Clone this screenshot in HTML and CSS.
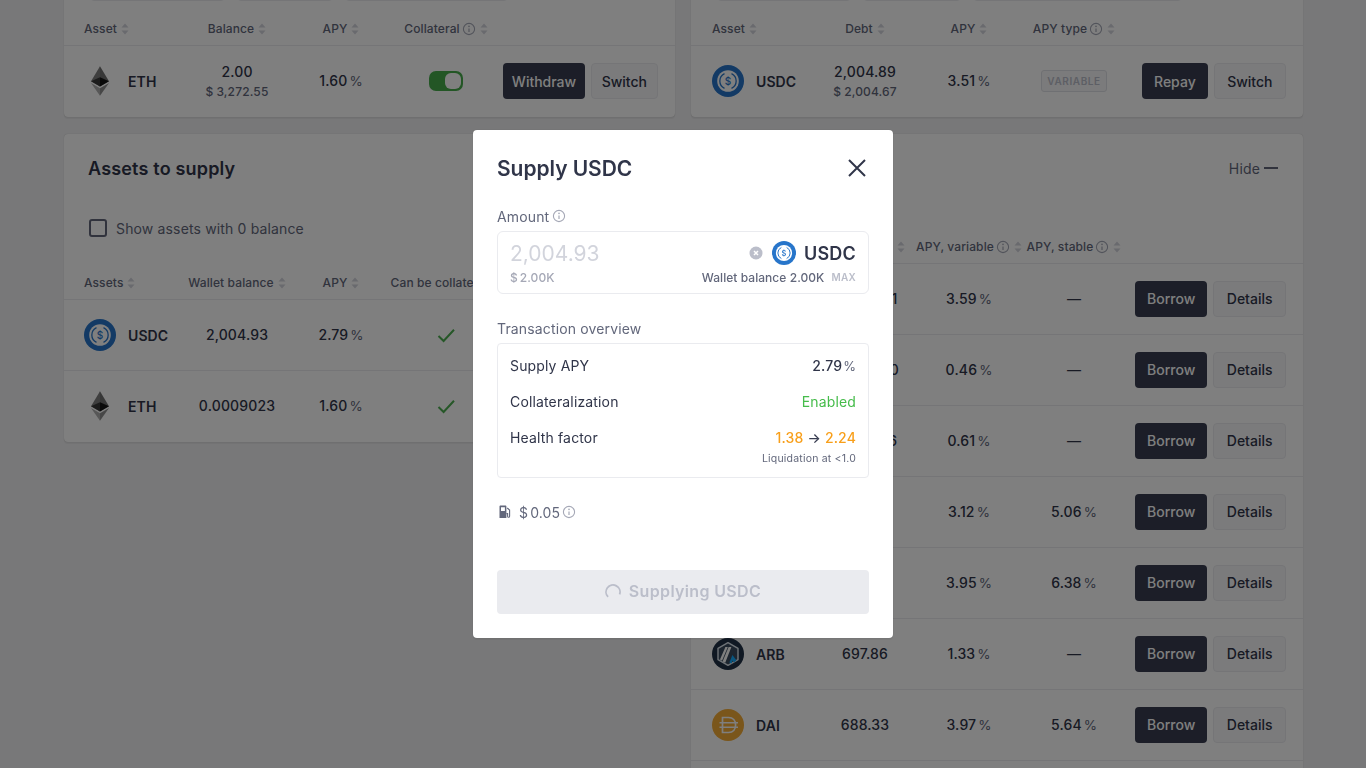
FILE: index.html
```html
<!DOCTYPE html>
<html lang="en">
<head>
<meta charset="utf-8">
<title>Supply USDC</title>
<link rel="stylesheet" href="styles.css">
</head>
<body>
<svg class="sprite" width="0" height="0" aria-hidden="true">
  <symbol id="i-sort" viewBox="0 0 8 12">
    <path d="M4 0.5 7.5 4.5H0.5Z"/><path d="M4 11.5 0.5 7.5H7.5Z"/>
  </symbol>
  <symbol id="i-info" viewBox="0 0 14 14">
    <circle cx="7" cy="7" r="5.6" fill="none" stroke="currentColor" stroke-width="1.1"/>
    <path d="M7 6.4V10" fill="none" stroke="currentColor" stroke-width="1.2"/>
    <circle cx="7" cy="4.4" r=".8" fill="currentColor"/>
  </symbol>
  <symbol id="i-usdc" viewBox="0 0 32 32">
    <circle cx="16" cy="16" r="16" fill="#2775CA"/>
    <circle cx="16" cy="16" r="10.8" fill="#fff"/>
    <path d="M12.5 8.6A8.2 8.2 0 0 0 12.5 23.4M19.5 8.6A8.2 8.2 0 0 1 19.5 23.4" fill="none" stroke="#2775CA" stroke-width="1.3"/>
    <text x="16" y="19.6" text-anchor="middle" font-family="Inter, sans-serif" font-size="10" font-weight="500" fill="#2775CA">$</text>
  </symbol>
  <symbol id="i-eth" viewBox="0 0 256 417">
    <polygon fill="#6E6E6E" points="127.96,0 125.17,9.5 125.17,285.17 127.96,287.96 255.92,212.32"/>
    <polygon fill="#7E7E7E" points="127.96,0 0,212.32 127.96,287.96 127.96,154.16"/>
    <polygon fill="#8E8E8E" points="127.96,312.19 126.39,314.11 126.39,412.31 127.96,416.91 256,236.59"/>
    <polygon fill="#AEAEAE" points="127.96,416.91 127.96,312.19 0,236.59"/>
    <polygon fill="#141414" points="127.96,287.96 255.92,212.32 127.96,154.16"/>
    <polygon fill="#393939" points="0,212.32 127.96,287.96 127.96,154.16"/>
  </symbol>
  <symbol id="i-arb" viewBox="0 0 32 32">
    <circle cx="16" cy="16" r="16" fill="#213147"/>
    <path d="M16 4.6 26 10.3V21.7L16 27.4 6 21.7V10.3Z" fill="#3a4a5f" stroke="#dfe7ef" stroke-width="1.4" stroke-linejoin="round"/>
    <path d="M10.6 23.4 16.6 9H19.4L13.2 24.8Z" fill="#fff"/>
    <path d="M8 21.6 13.4 9H15.8L10 22.8Z" fill="#fff"/>
    <path d="M17.4 24.4 20.4 17 24.4 22.2 22 24.6 20.4 22.4 19.6 25.4Z" fill="#12AAFF"/>
  </symbol>
  <symbol id="i-dai" viewBox="0 0 32 32">
    <circle cx="16" cy="16" r="16" fill="#F5AC37"/>
    <path d="M10.5 8.5H16.5C21 8.5 23.6 11.6 23.6 16S21 23.5 16.5 23.5H10.5Z" fill="none" stroke="#FEFEFD" stroke-width="1.7"/>
    <path d="M7.5 13.8H26M7.5 18.2H26" fill="none" stroke="#FEFEFD" stroke-width="1.5"/>
  </symbol>
  <symbol id="i-check" viewBox="0 0 20 20">
    <path d="M2.5 11 7.6 16 18 4.8" fill="none" stroke="currentColor" stroke-width="2"/>
  </symbol>
</svg>

<main class="page">
  <div class="column">
    <section class="card">
      <div class="card-head-top"></div>
      <div class="chips">
        <span class="chip chip-l1"></span>
        <span class="chip chip-l2"></span>
        <span class="chip chip-l3"></span>
      </div>
      <div class="grid thead">
        <span class="th th-left">Asset <svg class="sort"><use href="#i-sort"/></svg></span>
        <span class="th">Balance <svg class="sort"><use href="#i-sort"/></svg></span>
        <span class="th">APY <svg class="sort"><use href="#i-sort"/></svg></span>
        <span class="th">Collateral <svg class="info"><use href="#i-info"/></svg><svg class="sort"><use href="#i-sort"/></svg></span>
        <span></span>
      </div>
      <div class="grid trow last">
        <div class="asset"><span class="logo"><svg class="eth"><use href="#i-eth"/></svg></span><span class="sym">ETH</span></div>
        <div class="val stack"><span>2.00</span><span class="usd"><i>$</i>3,272.55</span></div>
        <div class="val"><span class="pct">1.60<em>%</em></span></div>
        <div class="val"><span class="toggle"></span></div>
        <div class="actions"><button class="btn dark tight">Withdraw</button><button class="btn line narrow">Switch</button></div>
      </div>
    </section>

    <section class="card">
      <header class="card-head"><h2 class="card-title">Assets to supply</h2></header>
      <label class="zero"><span class="box"></span>Show assets with 0 balance</label>
      <div class="grid thead">
        <span class="th th-left">Assets <svg class="sort"><use href="#i-sort"/></svg></span>
        <span class="th">Wallet balance <svg class="sort"><use href="#i-sort"/></svg></span>
        <span class="th">APY <svg class="sort"><use href="#i-sort"/></svg></span>
        <span class="th th-shift">Can be collateral <svg class="info"><use href="#i-info"/></svg></span>
        <span></span>
      </div>
      <div class="grid trow">
        <div class="asset"><span class="logo"><svg class="lg"><use href="#i-usdc"/></svg></span><span class="sym">USDC</span></div>
        <div class="val">2,004.93</div>
        <div class="val"><span class="pct">2.79<em>%</em></span></div>
        <div class="val"><svg class="check"><use href="#i-check"/></svg></div>
        <span></span>
      </div>
      <div class="grid trow last">
        <div class="asset"><span class="logo"><svg class="eth"><use href="#i-eth"/></svg></span><span class="sym">ETH</span></div>
        <div class="val">0.0009023</div>
        <div class="val"><span class="pct">1.60<em>%</em></span></div>
        <div class="val"><svg class="check"><use href="#i-check"/></svg></div>
        <span></span>
      </div>
    </section>
  </div>

  <div class="column right">
    <section class="card">
      <div class="card-head-top"></div>
      <div class="chips">
        <span class="chip chip-r1"></span>
        <span class="chip chip-r2"></span>
        <span class="chip chip-r3"></span>
      </div>
      <div class="grid thead">
        <span class="th th-left">Asset <svg class="sort"><use href="#i-sort"/></svg></span>
        <span class="th">Debt <svg class="sort"><use href="#i-sort"/></svg></span>
        <span class="th">APY <svg class="sort"><use href="#i-sort"/></svg></span>
        <span class="th">APY type <svg class="info"><use href="#i-info"/></svg><svg class="sort"><use href="#i-sort"/></svg></span>
        <span></span>
      </div>
      <div class="grid trow last">
        <div class="asset"><span class="logo"><svg class="lg"><use href="#i-usdc"/></svg></span><span class="sym">USDC</span></div>
        <div class="val stack"><span>2,004.89</span><span class="usd"><i>$</i>2,004.67</span></div>
        <div class="val"><span class="pct">3.51<em>%</em></span></div>
        <div class="val"><span class="badge">VARIABLE</span></div>
        <div class="actions"><button class="btn dark">Repay</button><button class="btn line">Switch</button></div>
      </div>
    </section>

    <section class="card card-fill">
      <header class="card-head-row"><span class="hide">Hide<span class="minus"></span></span></header>
      <div class="grid thead thead-borrow">
        <span></span>
        <span class="th th-end"><svg class="sort"><use href="#i-sort"/></svg></span>
        <span class="th">APY, variable <svg class="info"><use href="#i-info"/></svg><svg class="sort"><use href="#i-sort"/></svg></span>
        <span class="th">APY, stable <svg class="info"><use href="#i-info"/></svg><svg class="sort"><use href="#i-sort"/></svg></span>
        <span></span>
      </div>
      <div class="grid trow">
        <span></span>
        <div class="val">14,208.01</div><div class="val"><span class="pct">3.59<em>%</em></span></div><div class="val">—</div>
        <div class="actions"><button class="btn dark">Borrow</button><button class="btn line">Details</button></div>
      </div>
      <div class="grid trow">
        <span></span>
        <div class="val">12,345.60</div><div class="val"><span class="pct">0.46<em>%</em></span></div><div class="val">—</div>
        <div class="actions"><button class="btn dark">Borrow</button><button class="btn line">Details</button></div>
      </div>
      <div class="grid trow">
        <span></span>
        <div class="val">10,218.36</div><div class="val"><span class="pct">0.61<em>%</em></span></div><div class="val">—</div>
        <div class="actions"><button class="btn dark">Borrow</button><button class="btn line">Details</button></div>
      </div>
      <div class="grid trow">
        <span></span>
        <span></span><div class="val"><span class="pct">3.12<em>%</em></span></div><div class="val"><span class="pct">5.06<em>%</em></span></div>
        <div class="actions"><button class="btn dark">Borrow</button><button class="btn line">Details</button></div>
      </div>
      <div class="grid trow">
        <span></span>
        <span></span><div class="val"><span class="pct">3.95<em>%</em></span></div><div class="val"><span class="pct">6.38<em>%</em></span></div>
        <div class="actions"><button class="btn dark">Borrow</button><button class="btn line">Details</button></div>
      </div>
      <div class="grid trow">
        <div class="asset"><span class="logo"><svg class="lg"><use href="#i-arb"/></svg></span><span class="sym">ARB</span></div>
        <div class="val">697.86</div><div class="val"><span class="pct">1.33<em>%</em></span></div><div class="val">—</div>
        <div class="actions"><button class="btn dark">Borrow</button><button class="btn line">Details</button></div>
      </div>
      <div class="grid trow">
        <div class="asset"><span class="logo"><svg class="lg"><use href="#i-dai"/></svg></span><span class="sym">DAI</span></div>
        <div class="val">688.33</div><div class="val"><span class="pct">3.97<em>%</em></span></div><div class="val"><span class="pct">5.64<em>%</em></span></div>
        <div class="actions"><button class="btn dark">Borrow</button><button class="btn line">Details</button></div>
      </div>
    </section>
  </div>
</main>

<div class="backdrop">
  <div class="modal" role="dialog">
    <div class="modal-head">
      <h2 class="modal-title">Supply USDC</h2>
      <svg class="close" viewBox="0 0 24 24"><path d="M4 4 20 20M20 4 4 20" fill="none" stroke="currentColor" stroke-width="2"/></svg>
    </div>

    <div class="label">Amount<svg class="info"><use href="#i-info"/></svg></div>
    <div class="amount">
      <div class="amount-top">
        <span class="amount-value">2,004.93</span>
        <svg class="clear" viewBox="0 0 14 14"><circle cx="7" cy="7" r="6.5" fill="#BBBECA"/><path d="M5 5 9 9M9 5 5 9" fill="none" stroke="#fff" stroke-width="1.5"/></svg>
        <svg class="token"><use href="#i-usdc"/></svg>
        <span class="amount-sym">USDC</span>
      </div>
      <div class="amount-sub">
        <span class="amount-usd"><i>$</i>2.00K</span>
        <span class="wallet">Wallet balance 2.00K</span>
        <span class="max">MAX</span>
      </div>
    </div>

    <div class="label label-gap">Transaction overview</div>
    <div class="overview">
      <div class="ov-row"><span>Supply APY</span><span class="pct ov-pct">2.79<em>%</em></span></div>
      <div class="ov-row"><span>Collateralization</span><span class="ok">Enabled</span></div>
      <div class="ov-row"><span>Health factor</span><span class="hf">1.38<span class="arrow">→</span>2.24</span></div>
      <div class="liq">Liquidation at &lt;1.0</div>
    </div>

    <div class="gas">
      <svg class="pump" viewBox="0 0 14 14"><path d="M1.5 1.6C1.5 1 2 .6 2.5.6H7.3C7.9.6 8.4 1 8.4 1.6V13H1.5ZM3 2.3V6H6.9V2.3Z" fill="currentColor" fill-rule="evenodd"/><path d="M9.2 3 11.6 5V11.2C11.6 12.6 9.6 12.6 9.6 11.2V8.6H8.4" fill="none" stroke="currentColor" stroke-width="1.1"/></svg>
      <span class="gas-val"><i>$</i>0.05</span>
      <svg class="info"><use href="#i-info"/></svg>
    </div>

    <button class="submit">
      <svg class="spin" viewBox="0 0 16 16"><path d="M3.05 12.95A7 7 0 1 1 14.6 10.4" fill="none" stroke="currentColor" stroke-width="1.8"/></svg>
      <span class="submit-text">Supplying USDC</span>
    </button>
  </div>
</div>
</body>
</html>
```

FILE: styles.css
```css
* { box-sizing: border-box; }
html, body { height: 100%; }
body {
  margin: 0;
  overflow: hidden;
  background: #F1F1F3;
  color: #303549;
  font-family: Inter, "Liberation Sans", sans-serif;
  font-size: 14px;
  letter-spacing: .15px;
}
i, em { font-style: normal; }
.sprite { position: absolute; }

.page {
  display: grid;
  grid-template-columns: 611px 612px;
  gap: 16px;
  margin-top: -120px;
  padding: 0 63px 0 64px;
}
.column { display: flex; flex-direction: column; gap: 17px; }

.card {
  background: #fff;
  border-radius: 4px;
  box-shadow: 0 2px 1px rgba(0,0,0,.05), 0 0 1px rgba(0,0,0,.25);
}
.card-fill { padding-bottom: 60px; }
.card-head { padding: 23px 24px 0; height: 47px; }
.card-head-top { height: 77px; }
.card-head-row { display: flex; justify-content: flex-end; align-items: center; height: 68px; padding: 0 25px; }
.card-title { margin: 0; font-size: 18px; line-height: 24px; font-weight: 600; letter-spacing: .18px; }
.hide { display: flex; align-items: center; gap: 4px; color: #62677B; }
.minus { width: 14px; height: 2px; background: #62677B; }

.chips { display: flex; gap: 12px; padding-left: 26px; margin-bottom: 11px; margin-top: 20px; }
.chip { height: 24px; border: 1px solid #EAEBEF; border-radius: 4px; }
.chip-l1 { width: 135px; }
.chip-l2 { width: 96px; }
.chip-l3 { width: 163px; }
.chip-r1 { width: 134px; }
.chip-r2 { width: 98px; }
.chip-r3 { width: 209px; }

.zero { display: flex; align-items: center; gap: 9px; height: 24px; margin: 35px 0 26px 25px; color: #62677B; font-size: 14px; letter-spacing: .15px; }
.box { width: 18px; height: 18px; border: 2px solid #62677B; border-radius: 3px; }

.grid {
  display: grid;
  grid-template-columns: 101px 104px 104px 106px 1fr;
  padding: 0 17px 0 20px;
  align-items: center;
  border-bottom: 1px solid #EAEBEF;
}
.right .grid { padding-left: 21px; }
.thead { height: 34px; }
.thead-borrow { margin-top: 28px; }
.trow { height: 71px; }
.trow.last { border-bottom-color: transparent; }

.th {
  display: flex;
  justify-content: center;
  align-items: center;
  gap: 4px;
  color: #62677B;
  font-size: 12px;
  font-weight: 500;
  letter-spacing: .1px;
  white-space: nowrap;
}
.th-left { justify-content: flex-start; }
.th-end { justify-content: flex-end; padding-right: 12px; }
.th-shift { padding-left: 3px; }
.sort { width: 8px; height: 12px; fill: #D2D4DC; flex: none; }
.info { width: 14px; height: 14px; color: #A5A8B6; flex: none; }
.th .info { margin-left: -2px; }

.asset { display: flex; align-items: center; gap: 12px; }
.logo { width: 32px; height: 32px; display: flex; align-items: center; justify-content: center; }
.lg { width: 32px; height: 32px; }
.eth { width: 18px; height: 30px; }
.sym { font-weight: 600; font-size: 14px; letter-spacing: .1px; }
.val {
  display: flex;
  flex-direction: column;
  align-items: center;
  font-weight: 500;
  line-height: 18px;
  white-space: nowrap;
}
.stack { padding-top: 1px; }
.usd { margin-top: 3px; font-size: 12px; line-height: 16px; font-weight: 500; color: #62677B; letter-spacing: .15px; }
.usd i, .amount-usd i { margin-right: 3px; }
.gas-val i { margin-right: 2px; }
.pct em { margin-left: 2px; color: #62677B; font-weight: 400; font-size: 13.5px; letter-spacing: 0; }
.check { width: 20px; height: 20px; color: #4CAF50; }
.toggle {
  display: block;
  width: 34px;
  height: 20px;
  padding: 2px;
  background: #46AC4B;
  border-radius: 7px;
}
.toggle::after {
  content: "";
  display: block;
  width: 16px;
  height: 16px;
  margin-left: 14px;
  background: #fff;
  border-radius: 6px;
}
.badge {
  display: block;
  width: 66px;
  height: 22px;
  border: 1px solid #DFE0E6;
  border-radius: 3px;
  background: #F7F7F9;
  color: #BBBECA;
  font-size: 10px;
  font-weight: 600;
  line-height: 20px;
  text-align: center;
  letter-spacing: .6px;
}
.actions { display: flex; justify-content: flex-end; gap: 6px; }
.btn {
  height: 36px;
  padding: 0 12px;
  border-radius: 4px;
  font: 500 14px/1 Inter, "Liberation Sans", sans-serif;
  letter-spacing: 0;
  white-space: nowrap;
}
.btn.dark { background: #383D51; color: #fff; border: 0; }
.btn.line { padding: 0 12.5px; background: #F7F7F9; color: #303549; border: 1px solid #EAEBEF; }
.btn.dark.tight { padding: 0 8.5px; }
.btn.line.narrow { padding: 0 10px; }
.trow.last .btn { padding-top: 1px; }

.backdrop {
  position: fixed;
  inset: 0;
  display: flex;
  align-items: center;
  justify-content: center;
  background: rgba(0,0,0,.5);
}
.modal {
  width: 420px;
  padding: 24px;
  background: #fff;
  border-radius: 4px;
  box-shadow: 0 2px 1px rgba(0,0,0,.05), 0 0 1px rgba(0,0,0,.25);
}
.modal-head { display: flex; justify-content: space-between; align-items: center; height: 28px; margin-bottom: 24px; }
.modal-title { margin: 0; padding-top: 1px; font-size: 21px; font-weight: 600; line-height: 28px; letter-spacing: -.05px; }
.close { width: 24px; height: 24px; color: #303549; }
.label { display: flex; align-items: center; height: 20px; margin-bottom: 5px; color: #62677B; font-size: 14px; }
.label-gap { margin-top: 24px; }
.label .info { margin-left: 3px; }
.amount { height: 63px; padding: 7px 12px 8px; border: 1px solid #EAEBEF; border-radius: 6px; }
.amount-top { display: flex; align-items: center; height: 28px; }
.amount-value { flex: 1; font-size: 21px; letter-spacing: 0; color: #D2D4DC; }
.clear { width: 14px; height: 14px; margin-right: 9px; }
.token { width: 24px; height: 24px; margin-right: 8px; }
.amount-sym { font-size: 18px; font-weight: 600; letter-spacing: .2px; }
.amount-sub { display: flex; align-items: center; height: 16px; margin-top: 2px; font-size: 12px; font-weight: 500; letter-spacing: .05px; }
.amount-usd { flex: 1; color: #A5A8B6; }
.amount-usd i { margin-right: 2px; }
.wallet { color: #62677B; }
.max { margin-left: 7px; color: #BBBECA; font-size: 10px; font-weight: 600; letter-spacing: .3px; }
.overview { padding: 11px 12px 11px; border: 1px solid #EAEBEF; border-radius: 4px; }
.ov-row { display: flex; justify-content: space-between; align-items: center; height: 20px; margin-bottom: 16px; }
.ov-row:nth-child(3) { margin-bottom: 5px; }
.ov-pct { font-weight: 500; }
.ov-pct em { margin-left: 1px; font-size: 13px; }
.ok { color: #46BC4B; }
.hf { color: #F89F1A; font-weight: 500; }
.arrow { margin: 0 4px; color: #383D51; }
.liq { height: 14px; color: #62677B; font-size: 10.5px; line-height: 14px; text-align: right; letter-spacing: .2px; }
.gas { display: flex; align-items: center; height: 20px; margin-top: 24px; color: #62677B; }
.pump { width: 14px; height: 14px; margin: 0 7px 0 1px; }
.gas .info { margin-left: 2px; }
.submit {
  display: flex;
  align-items: center;
  justify-content: center;
  gap: 8px;
  width: 100%;
  height: 44px;
  margin-top: 48px;
  background: #EAEBEF;
  border: 0;
  border-radius: 4px;
  color: #BBBECA;
  font: 600 16px/1 Inter, "Liberation Sans", sans-serif;
  letter-spacing: .35px;
}
.submit-text { margin-top: -2px; }
.spin { width: 16px; height: 16px; }
```
